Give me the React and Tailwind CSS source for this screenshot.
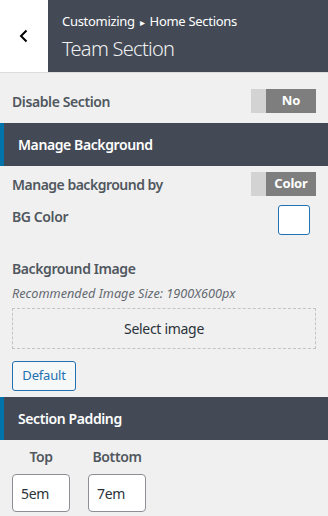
import React from 'react';

const font = { fontFamily: '"Noto Sans", "Open Sans", sans-serif' };

const Toggle = ({ label }) => (
    <div className="flex h-6 w-[65px]">
        <div className="w-[15px] bg-[#d3d3d3]" />
        <div className="flex flex-1 items-center justify-center bg-[#7e7e7e] text-[13px] font-bold tracking-[-0.2px] text-white">
            {label}
        </div>
    </div>
);

const SectionHeader = ({ title }) => (
    <div className="flex h-[43px] items-center border-l-4 border-[#0073aa] bg-[#434a56] pl-[14px] text-[14px] font-semibold tracking-[-0.4px] text-white">
        {title}
    </div>
);

export default function App() {
    return (
        <div className="h-[516px] w-[328px] overflow-hidden bg-[#f0f0f1]" style={font}>
            {/* cabecera */}
            <div className="flex h-[73px] border-b border-[#dcdcde]">
                <button className="flex w-12 items-center justify-center bg-white text-black">
                    <svg width="14" height="14" viewBox="0 0 14 14" fill="none">
                        <path d="M9.5 1.5 L4 7 L9.5 12.5" stroke="currentColor" strokeWidth="2" />
                    </svg>
                </button>
                <div className="flex flex-1 flex-col justify-center bg-[#434a56] pl-[14px] pt-[1px]">
                    <div className="text-[13px] leading-4 tracking-[-0.3px] text-white">
                        Customizing <span className="mx-[2px] text-[10px]">▸</span> Home Sections
                    </div>
                    <div className="mt-[7px] text-[20px] font-light leading-6 tracking-[-0.7px] text-[#f0f0f1]">Team Section</div>
                </div>
            </div>

            <div className="flex items-center justify-between px-3 pt-4 pb-[10px]">
                <span className="text-[14px] font-semibold tracking-[-0.4px] text-[#50575e]">Disable Section</span>
                <Toggle label="No" />
            </div>

            <SectionHeader title="Manage Background" />

            <div className="flex items-center justify-between px-3 pt-[6px]">
                <span className="text-[14px] font-semibold tracking-[-0.5px] text-[#50575e]">Manage background by</span>
                <Toggle label="Color" />
            </div>

            <div className="flex items-start justify-between pl-3 pr-[18px] pt-[9px]">
                <span className="mt-[2px] text-[14px] font-semibold leading-5 tracking-[-0.4px] text-[#50575e]">BG Color</span>
                <div className="h-[30px] w-8 rounded-[3px] border border-[#2271b1] bg-white" />
            </div>

            <div className="px-3 pt-[24px]">
                <div className="text-[14px] font-semibold leading-5 tracking-[-0.4px] text-[#50575e]">Background Image</div>
                <div className="mt-[6px] text-[12.7px] italic leading-4 text-[#646970]">
                    Recommended Image Size: 1900X600px
                </div>
                <div className="mt-[7px] flex h-[41px] items-center justify-center border border-dashed border-[#c3c4c7] text-[14px] tracking-[-0.3px] text-[#2c3338]">
                    Select image
                </div>
                <button className="mt-3 h-[30px] w-16 rounded-[3px] border border-[#2271b1] bg-[#f6f7f7] text-[13px] tracking-[-0.2px] text-[#2271b1]">
                    Default
                </button>
            </div>

            <div className="mt-[6px]">
                <SectionHeader title="Section Padding" />
            </div>

            <div className="flex gap-[18px] px-3 pt-[7px]">
                <div className="flex w-[58px] flex-col items-center">
                    <span className="text-[14px] font-semibold leading-5 tracking-[-0.4px] text-[#50575e]">Top</span>
                    <div className="mt-[7px] flex h-[38px] w-full items-center rounded-[4px] border border-[#8c8f94] bg-white px-[8px] text-[14px] tracking-[-0.3px] text-[#2c3338]">
                        5em
                    </div>
                </div>
                <div className="flex w-[58px] flex-col items-center">
                    <span className="text-[14px] font-semibold leading-5 tracking-[-0.4px] text-[#50575e]">Bottom</span>
                    <div className="mt-[7px] flex h-[38px] w-full items-center rounded-[4px] border border-[#8c8f94] bg-white px-[8px] text-[14px] tracking-[-0.3px] text-[#2c3338]">
                        7em
                    </div>
                </div>
            </div>
        </div>
    );
}
